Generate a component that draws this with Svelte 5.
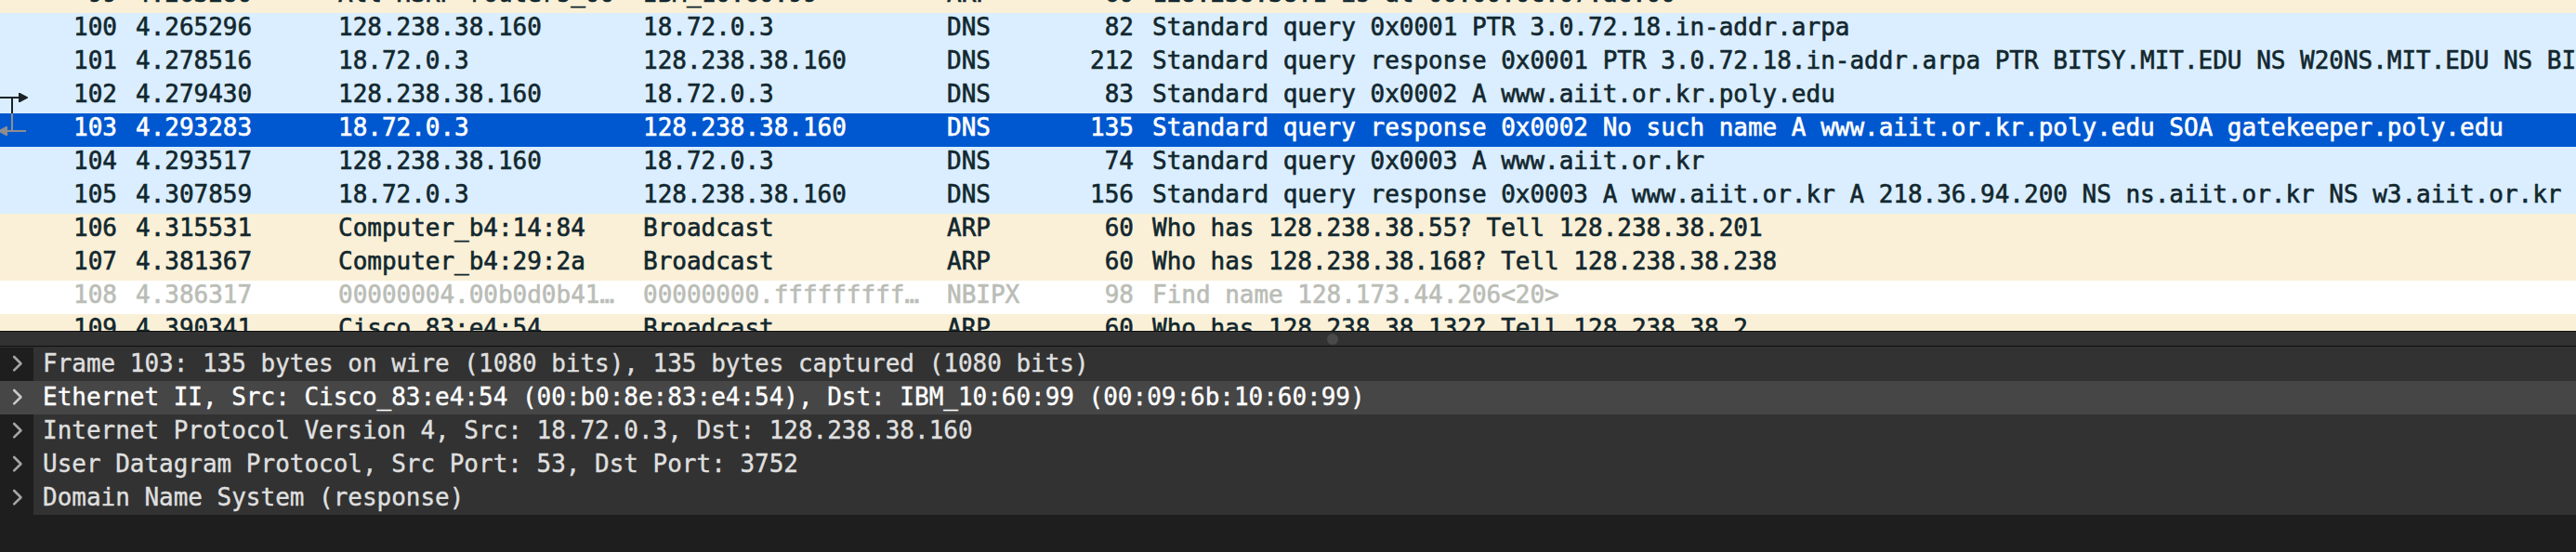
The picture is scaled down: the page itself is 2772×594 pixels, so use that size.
<script lang="ts">
  type Packet = {
    no: number;
    time: string;
    source: string;
    destination: string;
    protocol: string;
    length: number;
    info: string;
  };

  const packets: Packet[] = [
    { no: 99, time: "4.263280", source: "All-HSRP-routers_00", destination: "IBM_10:60:99", protocol: "ARP", length: 60, info: "128.238.38.1 is at 00:00:0c:07:ac:00" },
    { no: 100, time: "4.265296", source: "128.238.38.160", destination: "18.72.0.3", protocol: "DNS", length: 82, info: "Standard query 0x0001 PTR 3.0.72.18.in-addr.arpa" },
    { no: 101, time: "4.278516", source: "18.72.0.3", destination: "128.238.38.160", protocol: "DNS", length: 212, info: "Standard query response 0x0001 PTR 3.0.72.18.in-addr.arpa PTR BITSY.MIT.EDU NS W20NS.MIT.EDU NS BITSY.MIT.EDU" },
    { no: 102, time: "4.279430", source: "128.238.38.160", destination: "18.72.0.3", protocol: "DNS", length: 83, info: "Standard query 0x0002 A www.aiit.or.kr.poly.edu" },
    { no: 103, time: "4.293283", source: "18.72.0.3", destination: "128.238.38.160", protocol: "DNS", length: 135, info: "Standard query response 0x0002 No such name A www.aiit.or.kr.poly.edu SOA gatekeeper.poly.edu" },
    { no: 104, time: "4.293517", source: "128.238.38.160", destination: "18.72.0.3", protocol: "DNS", length: 74, info: "Standard query 0x0003 A www.aiit.or.kr" },
    { no: 105, time: "4.307859", source: "18.72.0.3", destination: "128.238.38.160", protocol: "DNS", length: 156, info: "Standard query response 0x0003 A www.aiit.or.kr A 218.36.94.200 NS ns.aiit.or.kr NS w3.aiit.or.kr A 222.106.36.66" },
    { no: 106, time: "4.315531", source: "Computer_b4:14:84", destination: "Broadcast", protocol: "ARP", length: 60, info: "Who has 128.238.38.55? Tell 128.238.38.201" },
    { no: 107, time: "4.381367", source: "Computer_b4:29:2a", destination: "Broadcast", protocol: "ARP", length: 60, info: "Who has 128.238.38.168? Tell 128.238.38.238" },
    { no: 108, time: "4.386317", source: "00000004.00b0d0b41…", destination: "00000000.fffffffff…", protocol: "NBIPX", length: 98, info: "Find name 128.173.44.206<20>" },
    { no: 109, time: "4.390341", source: "Cisco_83:e4:54", destination: "Broadcast", protocol: "ARP", length: 60, info: "Who has 128.238.38.132? Tell 128.238.38.2" },
  ];

  const layers = [
    "Frame 103: 135 bytes on wire (1080 bits), 135 bytes captured (1080 bits)",
    "Ethernet II, Src: Cisco_83:e4:54 (00:b0:8e:83:e4:54), Dst: IBM_10:60:99 (00:09:6b:10:60:99)",
    "Internet Protocol Version 4, Src: 18.72.0.3, Dst: 128.238.38.160",
    "User Datagram Protocol, Src Port: 53, Dst Port: 3752",
    "Domain Name System (response)",
  ];

  let selected = $state(103);
  let activeLayer = $state(1);
</script>

<div class="window">
  <div class="packet-list">
    {#each packets as p}
      <div
        class="packet {p.protocol.toLowerCase()}"
        class:selected={p.no === selected}
        onclick={() => (selected = p.no)}
        role="presentation"
      >
        <div class="related">
          {#if p.no === 102}
            <svg width="36" height="36">
              <path d="M0 19H22M13 19V36" />
              <path class="head" d="M20 14H21.5L30 18.5V19.5L21.5 24H20Z" />
            </svg>
          {:else if p.no === 103}
            <svg width="36" height="36" class="response">
              <path d="M13 0V19M6 19H28" />
              <path class="head" d="M8 14H6.5L-2 18.5V19.5L6.5 24H8Z" />
            </svg>
          {/if}
        </div>
        <div class="no">{p.no}</div>
        <div class="time">{p.time}</div>
        <div>{p.source}</div>
        <div>{p.destination}</div>
        <div>{p.protocol}</div>
        <div class="length">{p.length}</div>
        <div class="info">{p.info}</div>
      </div>
    {/each}
  </div>

  <div class="splitter"><span class="grip"></span></div>

  <div class="details">
    {#each layers as layer, i}
      <div
        class="layer"
        class:active={i === activeLayer}
        onclick={() => (activeLayer = i)}
        role="presentation"
      >
        <div class="toggle">
          <svg width="36" height="36">
            <path d="M15.2 10L22.5 17.2L15.2 24.4" />
          </svg>
        </div>
        <div class="text">{layer}</div>
      </div>
    {/each}
  </div>
</div>

<style>
  :global(body) {
    background: #1e1e1e;
    overflow: hidden;
  }

  .window {
    display: flex;
    flex-direction: column;
    width: 2772px;
    height: 594px;
    overflow: hidden;
    background: #1e1e1e;
    font-family: "DejaVu Sans Mono", monospace;
    font-size: 26px;
    letter-spacing: -0.02px;
    white-space: pre;
    cursor: default;
  }

  /* scrolled so that the first and last packets are cut off */
  .packet-list {
    display: flex;
    flex-direction: column;
    justify-content: flex-end;
    flex: none;
    height: 374px;
    margin-bottom: -18px;
    overflow: hidden;
  }

  .packet {
    display: grid;
    grid-template-columns: 36px 90px 238px 328px 327px 118px 83px 1fr;
    flex: none;
    height: 36px;
    line-height: 30px;
    color: #12272e;
    -webkit-text-stroke: 0.6px currentColor;
  }

  .packet > div {
    min-width: 0;
  }

  .dns {
    background: #daeeff;
  }

  .arp {
    background: #faf0d7;
  }

  .nbipx {
    background: #fff;
    color: #babdb6;
  }

  .packet.selected {
    background: #0058d0;
    color: #fff;
  }

  .no,
  .length {
    text-align: right;
  }

  .time,
  .info {
    padding-left: 20px;
  }

  .info {
    overflow: hidden;
  }

  .related svg,
  .toggle svg {
    display: block;
  }

  .related path {
    fill: none;
    stroke: #1a2226;
    stroke-width: 2;
  }

  .related .head {
    fill: #1a2226;
    stroke: none;
  }

  .response path {
    stroke: #8e8e8e;
  }

  .response .head {
    fill: #8e8e8e;
  }

  .splitter {
    display: flex;
    flex: none;
    position: relative;
    z-index: 1;
    justify-content: center;
    align-items: center;
    box-sizing: border-box;
    height: 17px;
    padding-left: 96px;
    background: #323232;
    border-top: 1px solid #0f0f0f;
    border-bottom: 1px solid #0f0f0f;
  }

  .grip {
    width: 12px;
    height: 12px;
    border-radius: 50%;
    background: #4a4a4a;
  }

  .details {
    border-top: 1px solid #323232;
    line-height: 34px;
    color: #dfdfdf;
  }

  .layer {
    display: flex;
    height: 36px;
    background: #323232;
    -webkit-text-stroke: 0.4px currentColor;
  }

  .toggle {
    flex: none;
    width: 36px;
    background: #1e1e1e;
  }

  .toggle path {
    fill: none;
    stroke: #a5a5a5;
    stroke-width: 2.6;
    stroke-linecap: round;
    stroke-linejoin: round;
  }

  .text {
    padding-left: 10px;
  }

  .layer.active,
  .active .toggle {
    background: #464646;
    color: #fff;
  }

  .active .toggle path {
    stroke: #c8c8c8;
  }
</style>
